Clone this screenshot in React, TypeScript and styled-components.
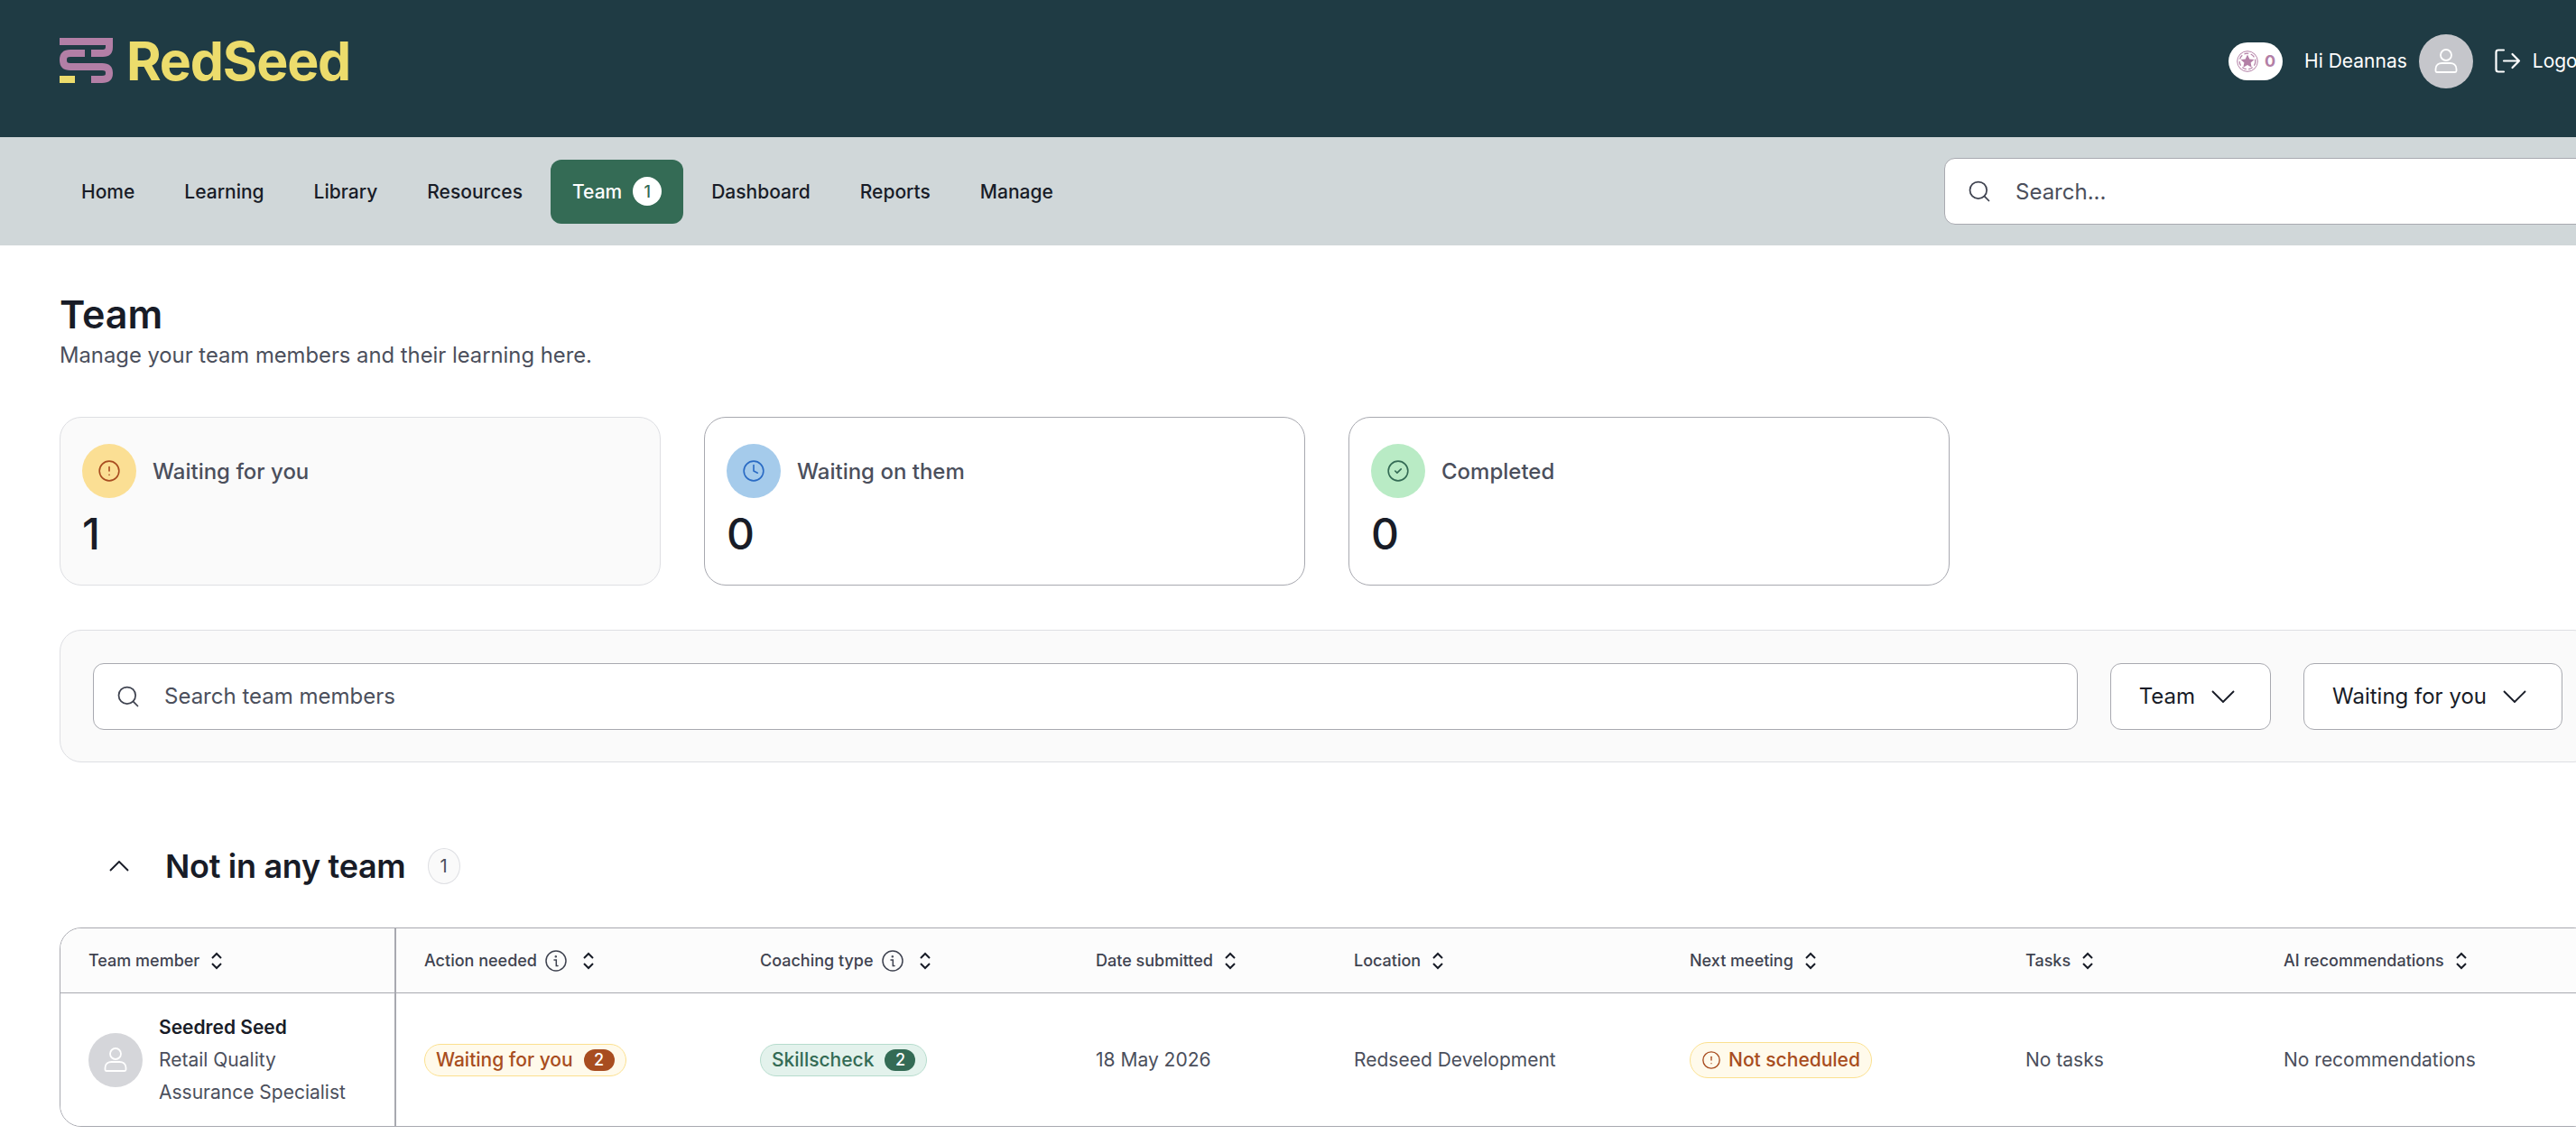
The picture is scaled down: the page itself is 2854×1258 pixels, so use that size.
import React from 'react'
import styled, { createGlobalStyle } from 'styled-components'
import { Search, CircleAlert, Clock, CircleCheck } from 'lucide-react'

const GlobalStyle = createGlobalStyle`
  html, body {
    margin: 0;
    padding: 0;
    width: 2854px;
    height: 1258px;
    overflow: hidden;
    background: #fff;
  }
  * { box-sizing: border-box; }
`

const Page = styled.div`
  width: 2941px;
  font-family: Inter, "Noto Sans", sans-serif;
  color: #181c27;
`

const Header = styled.header`
  height: 152px;
  padding: 0 66px;
  display: flex;
  align-items: center;
  justify-content: space-between;
  background: #1f3b44;
`

const Brand = styled.div`
  display: flex;
  align-items: center;
  gap: 15px;
  margin-top: -18px;
`

const BrandName = styled.span`
  font-size: 59px;
  font-weight: 700;
  letter-spacing: -1.2px;
  line-height: 1;
  color: #ecdc6c;
`

const UserArea = styled.div`
  display: flex;
  align-items: center;
  margin-top: -17px;
  color: #fff;
  font-size: 21px;
`

const PointsPill = styled.div`
  width: 60px;
  height: 42px;
  margin-right: 24px;
  padding-left: 9px;
  display: flex;
  align-items: center;
  gap: 7px;
  border-radius: 21px;
  background: #fff;
  color: #b37fa6;
  font-size: 18px;
  font-weight: 700;
`

const Greeting = styled.span`
  margin-right: 13px;
`

const UserAvatar = styled.div<{ $size: number; $bg: string }>`
  flex: none;
  width: ${p => p.$size}px;
  height: ${p => p.$size}px;
  display: flex;
  align-items: center;
  justify-content: center;
  border-radius: 50%;
  background: ${p => p.$bg};
`

const LogoutLink = styled.div`
  margin-left: 24px;
  display: flex;
  align-items: center;
  gap: 13px;
`

const NavBar = styled.nav`
  height: 120px;
  padding: 0 66px;
  display: flex;
  align-items: center;
  justify-content: space-between;
  background: #d0d7d9;
`

const NavItems = styled.div`
  display: flex;
  align-items: center;
  gap: 7px;
`

const NavItem = styled.div<{ $active?: boolean }>`
  height: 71px;
  padding: 0 24px;
  display: flex;
  align-items: center;
  gap: 12px;
  border-radius: 12px;
  font-size: 21px;
  font-weight: 550;
  color: ${p => (p.$active ? '#fff' : '#181c27')};
  background: ${p => (p.$active ? '#346b55' : 'transparent')};
`

const NavCount = styled.span`
  width: 32px;
  height: 32px;
  display: flex;
  align-items: center;
  justify-content: center;
  border-radius: 50%;
  background: #fff;
  color: #346b55;
  font-size: 18px;
`

const NavSearch = styled.div`
  width: 721px;
  height: 74px;
  padding: 0 24px;
  display: flex;
  align-items: center;
  gap: 26px;
  border: 1px solid #a8a9b0;
  border-radius: 12px;
  background: #fff;
  color: #4b4f5c;
  font-size: 24px;
`

const Main = styled.main`
  padding: 48px 66px 0;
`

const Title = styled.h1`
  margin: 0;
  font-size: 43px;
  line-height: 56px;
  font-weight: 600;
`

const Subtitle = styled.p`
  margin: 0;
  font-size: 23.8px;
  line-height: 36px;
  color: #4b4f5c;
`

const StatRow = styled.div`
  margin-top: 50px;
  display: flex;
  gap: 48px;
`

const StatCard = styled.div<{ $selected?: boolean }>`
  width: 666px;
  height: 187px;
  padding: 29px 24px;
  border: 1px solid ${p => (p.$selected ? '#dedfe3' : '#a8a9b0')};
  border-radius: 24px;
  background: ${p => (p.$selected ? '#fafafa' : '#fff')};
`

const StatHead = styled.div`
  display: flex;
  align-items: center;
  gap: 18px;
  font-size: 24px;
  font-weight: 500;
  color: #4b4f5c;
`

const StatIcon = styled.div<{ $bg: string; $fg: string }>`
  width: 60px;
  height: 60px;
  display: flex;
  align-items: center;
  justify-content: center;
  border-radius: 50%;
  background: ${p => p.$bg};
  color: ${p => p.$fg};
`

const StatValue = styled.div`
  margin-top: 11px;
  font-size: 48px;
  line-height: 58px;
  font-weight: 500;
`

const FilterPanel = styled.div`
  margin-top: 49px;
  height: 147px;
  padding: 0 35px 0 36px;
  display: flex;
  align-items: center;
  gap: 36px;
  border: 1px solid #dedfe3;
  border-radius: 24px;
  background: #fafafa;
`

const SearchField = styled.div`
  flex: 1;
  height: 74px;
  padding: 0 24px;
  display: flex;
  align-items: center;
  gap: 26px;
  border: 1px solid #a8a9b0;
  border-radius: 12px;
  background: #fff;
  color: #4b4f5c;
  font-size: 24px;
`

const SelectBox = styled.div`
  height: 74px;
  padding: 0 39px 0 31px;
  display: flex;
  align-items: center;
  gap: 18px;
  border: 1px solid #a8a9b0;
  border-radius: 12px;
  background: #fff;
  font-size: 24px;
`

const GroupHead = styled.div`
  margin-top: 85px;
  height: 60px;
  padding-left: 55px;
  display: flex;
  align-items: center;
`

const GroupTitle = styled.h2`
  margin: 0 24px 0 40px;
  font-size: 36px;
  font-weight: 600;
  letter-spacing: -0.3px;
`

const GroupCount = styled.span`
  width: 36px;
  height: 40px;
  display: flex;
  align-items: center;
  justify-content: center;
  border: 1px solid #dedfe3;
  border-radius: 50%;
  background: #fafafa;
  font-size: 20px;
  color: #4b4f5c;
`

const Table = styled.div`
  margin-top: 38px;
  height: 221px;
  border: 1px solid #a8a9b0;
  border-radius: 24px;
  overflow: hidden;
`

const Row = styled.div<{ $head?: boolean }>`
  display: grid;
  grid-template-columns: 372px 372px 372px 286px 372px 372px 286px 1fr;
  height: ${p => (p.$head ? '72px' : '147px')};
  background: ${p => (p.$head ? '#fcfcfc' : '#fff')};
  border-bottom: ${p => (p.$head ? '1px solid #a8a9b0' : 'none')};
`

const Cell = styled.div<{ $first?: boolean }>`
  padding-left: 31px;
  display: flex;
  align-items: center;
  font-size: 21px;
  color: #4b4f5c;
  border-right: ${p => (p.$first ? '2px solid #a8a9b0' : 'none')};
`

const HeadLabel = styled.span`
  font-size: 18px;
  font-weight: 550;
  color: #3f4350;
`

const SortMark = styled.svg`
  margin-left: 13px;
`

const InfoMark = styled.svg`
  margin-left: 9px;
  margin-right: 5px;
`

const Member = styled.div`
  display: flex;
  align-items: center;
  gap: 18px;
`

const MemberText = styled.div`
  line-height: 36px;
`

const MemberName = styled.div`
  font-weight: 600;
  color: #181c27;
`

const Badge = styled.span<{ $tone: 'amber' | 'green'; $tall?: boolean }>`
  height: ${p => (p.$tall ? '40px' : '36px')};
  padding: 0 12px;
  display: inline-flex;
  align-items: center;
  gap: 8px;
  border-radius: 20px;
  font-weight: 550;
  font-size: 21px;
  border: 1px solid ${p => (p.$tone === 'amber' ? '#fbe08f' : '#b6dccd')};
  background: ${p => (p.$tone === 'amber' ? '#fffaeb' : '#e3f2ec')};
  color: ${p => (p.$tone === 'amber' ? '#a84d20' : '#346b55')};
`

const BadgeCount = styled.span<{ $tone: 'amber' | 'green' }>`
  width: 34px;
  height: 24px;
  margin-left: 4px;
  display: flex;
  align-items: center;
  justify-content: center;
  border-radius: 12px;
  font-size: 18px;
  color: #fff;
  background: ${p => (p.$tone === 'amber' ? '#a84d20' : '#346b55')};
`

const Logo = () => (
  <svg width="59" height="50" viewBox="0 0 59 50" fill="none">
    <g stroke="#b37fa6" strokeWidth="8">
      <path d="M0 4H55V10Q55 17 48 17H35" />
      <path d="M28 17H12Q4 17 4 24.500Q4 32 12 32H47Q55 32 55 39Q55 46 47 46H35" />
    </g>
    <rect x="0" y="42" width="17" height="8" fill="#ecdc6c" />
  </svg>
)

const PointsIcon = () => (
  <svg width="24" height="24" viewBox="0 0 24 24" fill="none" stroke="#b37fa6">
    <circle cx="12" cy="12" r="11.300" strokeWidth="1" />
    <circle cx="12" cy="12" r="8.800" strokeWidth="1.200" strokeDasharray="5 2.500" />
    <path d="M12 4.500l2.300 4.900 5.200.6-3.900 3.500 1.100 5.200-4.700-2.700-4.700 2.700 1.100-5.200-3.900-3.500 5.200-.6z" fill="#b37fa6" stroke="none" />
  </svg>
)

const PersonIcon = ({ size, color }: { size: number; color: string }) => (
  <svg width={size} height={size} viewBox="0 0 28 28" fill="none" stroke={color} strokeWidth="1.800">
    <circle cx="14" cy="7" r="6" />
    <path d="M2.500 24.500V22.500C2.500 18 6 16 9.500 16H18.500C22 16 25.500 18 25.500 22.500V24.500Q25.500 26 24 26H4Q2.500 26 2.500 24.500Z" />
  </svg>
)

const LogoutIcon = () => (
  <svg width="29" height="27" viewBox="0 0 29 27" fill="none" stroke="#fff" strokeWidth="2.200" strokeLinecap="round" strokeLinejoin="round">
    <path d="M10 1.500H4Q1.500 1.500 1.500 4V23Q1.500 25.500 4 25.500H10" />
    <path d="M10 13.500H27M19.500 6L27 13.500L19.500 21" />
  </svg>
)

const InfoIcon = () => (
  <InfoMark width="24" height="24" viewBox="0 0 24 24" fill="none" stroke="#3f4350" strokeWidth="1.500">
    <circle cx="12" cy="12" r="11" />
    <path d="M10 11H12.300V17.500H14" strokeLinecap="round" />
    <circle cx="11.800" cy="7.300" r="0.500" />
  </InfoMark>
)

const SortIcon = () => (
  <SortMark width="12" height="20" viewBox="0 0 12 20" fill="none" stroke="#181c27" strokeWidth="2">
    <path d="M1 7L6 2L11 7M1 13L6 18L11 13" />
  </SortMark>
)

const ChevronDownIcon = () => (
  <svg width="26" height="14" viewBox="0 0 26 14" fill="none" stroke="#181c27" strokeWidth="1.900">
    <path d="M1 1L13 13L25 1" />
  </svg>
)

const ChevronUpIcon = () => (
  <svg width="22" height="12" viewBox="0 0 22 12" fill="none" stroke="#181c27" strokeWidth="1.900">
    <path d="M1 11L11 1L21 11" />
  </svg>
)

const columns = [
  { label: 'Team member' },
  { label: 'Action needed', info: true },
  { label: 'Coaching type', info: true },
  { label: 'Date submitted' },
  { label: 'Location' },
  { label: 'Next meeting' },
  { label: 'Tasks' },
  { label: 'AI recommendations' },
]

export default function App() {
  return (
    <Page>
      <GlobalStyle />
      <Header>
        <Brand>
          <Logo />
          <BrandName>RedSeed</BrandName>
        </Brand>
        <UserArea>
          <PointsPill>
            <PointsIcon />0
          </PointsPill>
          <Greeting>Hi Deannas</Greeting>
          <UserAvatar $size={60} $bg="#c5c6cb">
            <PersonIcon size={28} color="#fff" />
          </UserAvatar>
          <LogoutLink>
            <LogoutIcon />
            Logout
          </LogoutLink>
        </UserArea>
      </Header>
      <NavBar>
        <NavItems>
          <NavItem>Home</NavItem>
          <NavItem>Learning</NavItem>
          <NavItem>Library</NavItem>
          <NavItem>Resources</NavItem>
          <NavItem $active>
            Team <NavCount>1</NavCount>
          </NavItem>
          <NavItem>Dashboard</NavItem>
          <NavItem>Reports</NavItem>
          <NavItem>Manage</NavItem>
        </NavItems>
        <NavSearch>
          <Search size={28} strokeWidth={1.5} color="#3f4350" />
          Search...
        </NavSearch>
      </NavBar>
      <Main>
        <Title>Team</Title>
        <Subtitle>Manage your team members and their learning here.</Subtitle>
        <StatRow>
          <StatCard $selected>
            <StatHead>
              <StatIcon $bg="#fbdf94" $fg="#a84d20">
                <CircleAlert size={26} strokeWidth={1.5} />
              </StatIcon>
              Waiting for you
            </StatHead>
            <StatValue>1</StatValue>
          </StatCard>
          <StatCard>
            <StatHead>
              <StatIcon $bg="#a5cbeb" $fg="#2a6bc4">
                <Clock size={26} strokeWidth={1.5} />
              </StatIcon>
              Waiting on them
            </StatHead>
            <StatValue>0</StatValue>
          </StatCard>
          <StatCard>
            <StatHead>
              <StatIcon $bg="#b9ebc5" $fg="#346b55">
                <CircleCheck size={26} strokeWidth={1.5} />
              </StatIcon>
              Completed
            </StatHead>
            <StatValue>0</StatValue>
          </StatCard>
        </StatRow>
        <FilterPanel>
          <SearchField>
            <Search size={28} strokeWidth={1.5} color="#3f4350" />
            Search team members
          </SearchField>
          <SelectBox>
            Team
            <ChevronDownIcon />
          </SelectBox>
          <SelectBox>
            Waiting for you
            <ChevronDownIcon />
          </SelectBox>
        </FilterPanel>
        <GroupHead>
          <ChevronUpIcon />
          <GroupTitle>Not in any team</GroupTitle>
          <GroupCount>1</GroupCount>
        </GroupHead>
        <Table>
          <Row $head>
            {columns.map((c, i) => (
              <Cell key={c.label} $first={i === 0}>
                <HeadLabel>{c.label}</HeadLabel>
                {c.info && <InfoIcon />}
                <SortIcon />
              </Cell>
            ))}
          </Row>
          <Row>
            <Cell $first>
              <Member>
                <UserAvatar $size={60} $bg="#d5d6da">
                  <PersonIcon size={28} color="#fff" />
                </UserAvatar>
                <MemberText>
                  <MemberName>Seedred Seed</MemberName>
                  Retail Quality
                  <br />
                  Assurance Specialist
                </MemberText>
              </Member>
            </Cell>
            <Cell>
              <Badge $tone="amber">
                Waiting for you<BadgeCount $tone="amber">2</BadgeCount>
              </Badge>
            </Cell>
            <Cell>
              <Badge $tone="green">
                Skillscheck<BadgeCount $tone="green">2</BadgeCount>
              </Badge>
            </Cell>
            <Cell>18 May 2026</Cell>
            <Cell>Redseed Development</Cell>
            <Cell>
              <Badge $tone="amber" $tall>
                <CircleAlert size={22} strokeWidth={1.5} />
                Not scheduled
              </Badge>
            </Cell>
            <Cell>No tasks</Cell>
            <Cell>No recommendations</Cell>
          </Row>
        </Table>
      </Main>
    </Page>
  )
}
